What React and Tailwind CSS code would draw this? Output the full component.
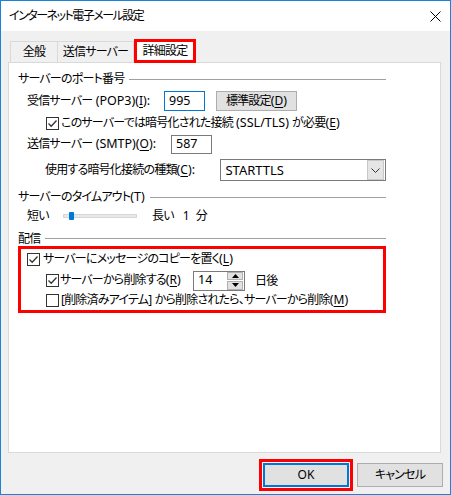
import React from "react";

const F = { fontFamily: "'Noto Sans','Noto Sans CJK JP',sans-serif" };

function U({ children }) {
  return <span className="underline underline-offset-2 tracking-normal">{children}</span>;
}

function L({ children }) {
  return <span className="tracking-normal text-[12.5px] whitespace-pre">{children}</span>;
}

function Check({ checked }) {
  return (
    <span className="inline-flex w-[13px] h-[13px] border border-[#333333] bg-white items-center justify-center shrink-0">
      {checked && (
        <svg width="11" height="11" viewBox="0 0 11 11">
          <path d="M1.5 5.5 L4.2 8.2 L9.5 2.5" fill="none" stroke="#333333" strokeWidth="1.3" />
        </svg>
      )}
    </span>
  );
}

function Heading({ children }) {
  return (
    <div className="flex items-center h-full">
      <span className="pr-[5px]">{children}</span>
      <div className="flex-1 h-px bg-[#a0a0a0]" />
    </div>
  );
}

export default function App() {
  return (
    <div
      className="w-[451px] h-[495px] border border-[#1883d7] bg-[#f0f0f0] flex flex-col text-[12px] text-black leading-none tracking-[-0.8px] [font-feature-settings:'palt']"
      style={F}
    >
      {/* Title bar */}
      <div className="h-[30px] bg-white flex items-center justify-between pl-[8px] pr-[9px] shrink-0">
        <span className="text-[12px] tracking-[-1.5px]">インターネット電子メール設定</span>
        <svg width="11" height="11" viewBox="0 0 11 11">
          <path d="M0.5 0.5 L10.5 10.5 M10.5 0.5 L0.5 10.5" stroke="#000" strokeWidth="1" />
        </svg>
      </div>

      {/* Tabs */}
      <div className="flex items-end h-[31px] pl-[9px] shrink-0">
        <div className="h-[21px] w-[48px] border border-b-0 border-[#d9d9d9] flex items-center justify-center">全般</div>
        <div className="h-[21px] w-[76px] border border-l-0 border-b-0 border-[#d9d9d9] flex items-center justify-center">送信サーバー</div>
        <div className="h-[24px] w-[62px] border-[3px] border-[#ff0000] bg-white flex items-center justify-center -mb-[1px] relative z-10">詳細設定</div>
      </div>

      {/* Panel */}
      <div className="ml-[7px] w-[433px] h-[391px] border border-[#d9d9d9] bg-white shrink-0 pl-[9px] pt-[7px]">
        <div className="w-[368px] flex flex-col">
          <div className="h-[18px]">
            <Heading>サーバーのポート番号</Heading>
          </div>
          <div className="h-[20px] mt-[3px] flex items-center">
            <span className="pl-[9px] w-[146px]">受信サーバー<L> (POP3)(</L><U>I</U><L>):</L></span>
            <div className="w-[41px] h-[20px] border border-[#0078d7] flex items-center pl-[4px]"><L>995</L></div>
            <div className="ml-[11px] w-[81px] h-[20px] border border-[#adadad] bg-[#e1e1e1] flex items-center justify-center">
              標準設定<L>(</L><U>D</U><L>)</L>
            </div>
          </div>
          <div className="h-[24px] flex items-center pl-[28px] gap-[2px]">
            <Check checked />
            <span>このサーバーでは暗号化された接続<L> (SSL/TLS) </L>が必要<L>(</L><U>E</U><L>)</L></span>
          </div>
          <div className="h-[19px] flex items-center">
            <span className="pl-[9px] w-[153px]">送信サーバー<L> (SMTP)(</L><U>O</U><L>):</L></span>
            <div className="w-[41px] h-[19px] border border-[#7a7a7a] flex items-center pl-[4px]"><L>587</L></div>
          </div>
          <div className="h-[22px] mt-[5px] flex items-center">
            <span className="pl-[27px] w-[203px]">使用する暗号化接続の種類<L>(</L><U>C</U><L>):</L></span>
            <div className="w-[166px] h-[22px] border border-[#7a7a7a] flex items-center justify-between pl-[4px] pr-px">
              <span className="tracking-normal text-[13px]">STARTTLS</span>
              <div className="w-[17px] h-[20px] bg-[#e5e5e5] border border-[#c8c8c8] flex items-center justify-center">
                <svg width="9" height="5" viewBox="0 0 9 5">
                  <path d="M0.5 0.5 L4.5 4.5 L8.5 0.5" fill="none" stroke="#333" strokeWidth="1" />
                </svg>
              </div>
            </div>
          </div>
          <div className="h-[18px] mt-[7px]">
            <Heading>サーバーのタイムアウト<L>(T)</L></Heading>
          </div>
          <div className="h-[18px] mt-[1px] flex items-center">
            <span className="pl-[9px] w-[45px]">短い</span>
            <div className="relative w-[74px] h-[4px] bg-[#e7eaea] border border-[#d6d6d6]">
              <div className="absolute left-[5px] -top-[3px] w-[5px] h-[8px] bg-[#0078d7] rounded-[1px]" />
            </div>
            <span className="ml-[15px]">長い</span>
            <span className="ml-[9px] tracking-normal whitespace-pre">1  分</span>
          </div>
          <div className="h-[15px] mt-[6px]">
            <Heading>配信</Heading>
          </div>
          <div className="border-[3px] border-[#ff0000] h-[67px] flex flex-col">
            <div className="h-[21px] flex items-center pl-[6px] gap-[3px]">
              <Check checked />
              <span>サーバーにメッセージのコピーを置く<L>(</L><U>L</U><L>)</L></span>
            </div>
            <div className="h-[21px] flex items-center pl-[25px]">
              <Check checked />
              <span className="ml-[1px] w-[133px]">サーバーから削除する<L>(</L><U>R</U><L>)</L></span>
              <div className="w-[52px] h-[20px] border border-[#7a7a7a] flex items-center justify-between pl-[4px] pr-px">
                <L>14</L>
                <div className="w-[16px] h-[18px] flex flex-col gap-px">
                  <div className="flex-1 bg-[#e1e1e1] border border-[#b0b0b0] flex items-center justify-center">
                    <svg width="7" height="4" viewBox="0 0 7 4"><path d="M0 4 L3.5 0 L7 4 Z" fill="#000" /></svg>
                  </div>
                  <div className="flex-1 bg-[#e1e1e1] border border-[#b0b0b0] flex items-center justify-center">
                    <svg width="7" height="4" viewBox="0 0 7 4"><path d="M0 0 L3.5 4 L7 0 Z" fill="#000" /></svg>
                  </div>
                </div>
              </div>
              <span className="ml-[10px]">日後</span>
            </div>
            <div className="h-[19px] flex items-center pl-[25px] gap-[2px]">
              <Check />
              <span>[削除済みアイテム]<L> </L>から削除されたら、サーバーから削除<L>(</L><U>M</U><L>)</L></span>
            </div>
          </div>
        </div>
      </div>

      {/* Buttons */}
      <div className="flex justify-end items-start pr-[7px] mt-[6px] gap-[4px]">
        <div className="border-[3px] border-[#ff0000] p-px">
          <div className="w-[86px] h-[24px] border-2 border-[#0078d7] bg-[#e1e1e1] flex items-center justify-center tracking-normal">OK</div>
        </div>
        <div className="mt-[4px] w-[86px] h-[24px] border border-[#adadad] bg-[#e1e1e1] flex items-center justify-center">キャンセル</div>
      </div>
    </div>
  );
}
